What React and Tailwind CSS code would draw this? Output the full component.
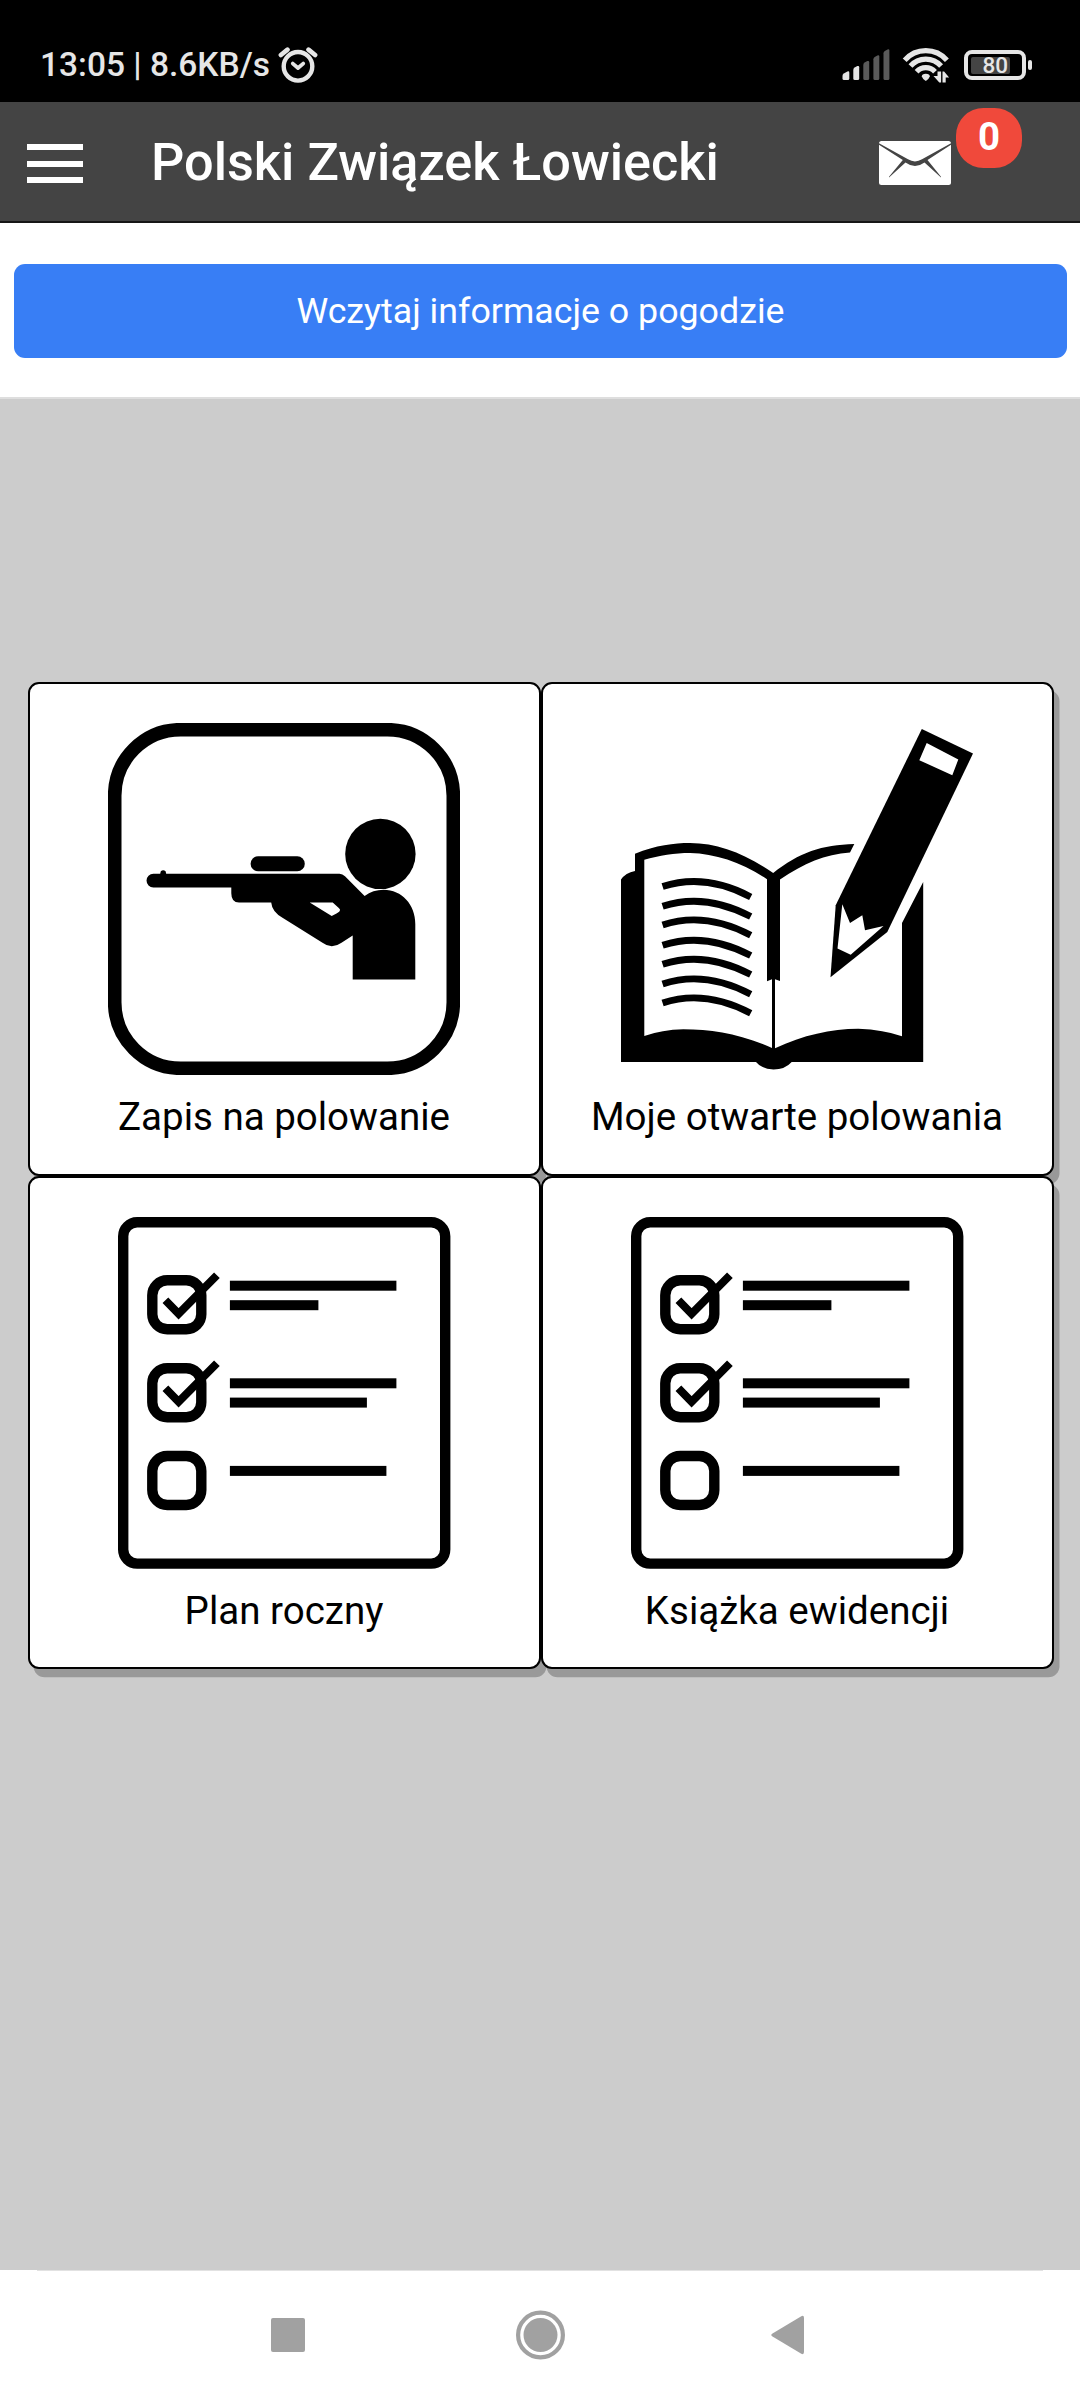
import React from "react";

const INK = "#000";

function AlarmIcon() {
  return (
    <svg className="ml-[7px] h-[38px] w-[40px]" viewBox="277.5 45 40 38" fill="none" stroke="#e6e6e6" strokeLinecap="round">
      <circle cx="297.5" cy="65.3" r="14.3" strokeWidth="4.4" />
      <path d="M292.3 62.6L297.5 67L302.7 62.6" strokeWidth="3.8" strokeLinejoin="round" />
      <path d="M280.4 54L287 48.6M314.6 54L308 48.6" strokeWidth="4.6" />
    </svg>
  );
}

function SignalIcon() {
  return (
    <svg className="h-[34px] w-[48px]" viewBox="842 48 48 34">
      <g fill="#e6e6e6">
        <path d="M842.5 76q0-1.6 1.3-2.4l3.6-2.1q1.9-.7 1.9 1.2v5.800q0 1.500-1.500 1.500h-3.800q-1.500 0-1.500-1.500z" />
        <path d="M853.300 70q0-1.600 1.300-2.400l2.700-1.500q1.900-.7 1.900 1.200v11.200q0 1.500-1.500 1.500h-2.900q-1.500 0-1.500-1.500z" />
      </g>
      <g fill="#5a5a5a">
        <path d="M863.300 65q0-1.600 1.300-2.400l2.700-1.500q1.900-.7 1.900 1.200v16.200q0 1.500-1.500 1.500h-2.900q-1.500 0-1.500-1.500z" />
        <path d="M873.400 59.300q0-1.600 1.300-2.400l2.700-1.500q1.900-.7 1.900 1.200v21.900q0 1.500-1.500 1.500h-2.900q-1.500 0-1.500-1.500z" />
        <path d="M883.500 53.300q0-1.600 1.300-2.400l2.700-1.500q1.900-.7 1.900 1.200v27.900q0 1.500-1.500 1.500h-2.900q-1.500 0-1.500-1.500z" />
      </g>
    </svg>
  );
}

function WifiIcon() {
  return (
    <svg className="ml-[12px] h-[38px] w-[48px]" viewBox="902 46 48 38">
      <g fill="none" stroke="#e6e6e6" strokeWidth="5.2">
        <path d="M904.700 60.200A28 28 0 0 1 946.900 60.200" />
        <path d="M910.500 66A20.400 20.400 0 0 1 941.100 66" />
        <path d="M916.600 71.700A12.500 12.500 0 0 1 935 71.700" />
      </g>
      <path d="M921.800 76.500Q921.800 74 925.800 73.800Q929.800 74 929.800 76.500Q929.300 78.500 925.800 81Q922.300 78.500 921.800 76.500z" fill="#e6e6e6" />
      <path d="M933.500 76h4v-4.500h3.600v11h-1.800z" fill="#e6e6e6" />
      <path d="M942.500 82.500v-11h1.600l5 6h-3.400v5z" fill="#e6e6e6" />
    </svg>
  );
}

function Battery() {
  return (
    <div className="ml-[14px] flex items-center">
      <div className="flex h-[30px] w-[62px] items-center rounded-[8px] border-4 border-[#e6e6e6] px-[3px]">
        <div className="flex h-[17px] w-[39px] items-center justify-end rounded-[2px] bg-[#444]">
          <span className="mr-[2px] text-[22.500px] leading-none font-medium text-[#e6e6e6]">80</span>
        </div>
      </div>
      <div className="ml-[2px] h-[10px] w-[4px] rounded-[2px] bg-[#e6e6e6]" />
    </div>
  );
}

function MailIcon() {
  return (
    <svg className="h-[44px] w-[72px]" viewBox="879 141 72 44">
      <rect x="879" y="141" width="72" height="44" rx="2.500" fill="#fff" />
      <path d="M879 143.200L908 159.300Q915 163.500 922 159.300L951 143.200V144.700L927.500 160L941 176.800V177.600L924.500 162.500Q915 169.500 905.500 162.500L889 177.600V176.800L902.800 160L879 144.700z" fill="#444" />
    </svg>
  );
}

function HunterIcon() {
  return (
    <svg className="h-[352px] w-[352px]" viewBox="108 722.800 352 352">
      <rect x="114.700" y="729.500" width="338.600" height="338.600" rx="66" fill="none" stroke={INK} strokeWidth="13.600" />
      <circle cx="380.400" cy="853.700" r="35.200" />
      <rect x="250.600" y="856" width="54.200" height="15" rx="7.500" />
      <path
        fillRule="evenodd"
        d="M153.400 873.500H160.200L160.800 871Q163.200 869 165.600 871L166.200 873.500H339.500Q342.500 873.500 345 876L364.600 895.700Q373 889.600 383.500 889.600C402 889.600 415.300 904.500 415.300 924V979.200H352.700V935.300L341.500 942.600Q331.700 949.600 322.500 942.600L282.500 917.600Q272 911.500 271.200 902.300H239Q231.300 902.300 231.300 893V887.300H153.400A6.900 6.900 0 0 1 153.400 873.500zM309.700 902.300L331.700 915.900L336.500 913.200Q342.500 910.500 338.500 907.500L332.700 902.300z"
      />
    </svg>
  );
}

const WRITTEN_LINES = [0, 19.7, 38.3, 58.7, 77.7, 97.3, 116.3];

function BookIcon() {
  return (
    <svg className="h-[352px] w-[352px]" viewBox="621 722.800 352 352">
      <path d="M621 879.300Q625.500 872.500 635 870.700V853.500C656 845 674 842.800 690 842.800C718 842.800 745 853.500 773.200 872.800C799 852 822 844.500 854.300 843.700L850 852.300C825 854 804 863 780 879.300V980.700L775 979V1048C803 1035 831 1028.500 858.300 1028.500Q884 1029.500 902 1036V922.700L923.200 881.700V1061.700H791.700Q785 1069.200 773.500 1069.200Q762 1069.200 756 1061.700H621z" />
      <path d="M644.300 859.600C659 855 675 852.700 690 852.700C716 853.500 742 862 767 879V981L772 979V1047.700C738 1033 712 1029 683.300 1029Q662 1029.500 644.300 1035.700z" fill="#fff" />
      <g fill="none" stroke={INK} strokeWidth="6.800">
        {WRITTEN_LINES.map((dy) => (
          <path key={dy} d="M662.600 886.400Q705 872.500 750.700 896.700" transform={`translate(0 ${dy})`} />
        ))}
      </g>
      <path d="M921.800 728.800L973 753.300L887.300 931.700L830.500 977L835.700 905z" />
      <path d="M926.700 742.700L958.300 759.300L952.300 775L919.300 760zM842.300 904L850 922.700L862.300 915L865 930L883.500 925.700L850.700 954.600L837.500 948.300z" fill="#fff" />
    </svg>
  );
}

const CHECKBOXES = [
  { y: 1280.200, checked: true },
  { y: 1368.200, checked: true },
  { y: 1456, checked: false },
];

const TEXT_BARS = [
  [1280.700, 166.500],
  [1300.200, 88.500],
  [1378.300, 166.500],
  [1397.600, 137],
  [1465.900, 156.500],
];

function ChecklistIcon() {
  return (
    <svg className="h-[352px] w-[352px]" viewBox="108 1217 352 352">
      <g fill="none" stroke={INK}>
        <rect x="123.200" y="1222.300" width="322" height="341.300" rx="14" strokeWidth="10.400" />
        {CHECKBOXES.map(({ y, checked }) => (
          <g key={y}>
            <rect x="152.300" y={y} width="49" height="49" rx="15" strokeWidth="10.400" />
            {checked && <path d="M0 0L13.200 13.500L51.500 -25" transform={`translate(165.400 ${y + 20})`} strokeWidth="8" />}
          </g>
        ))}
      </g>
      {TEXT_BARS.map(([y, width]) => (
        <rect key={y} x="229.900" y={y} width={width} height="10" />
      ))}
    </svg>
  );
}

function Tile({ icon, label, size }) {
  return (
    <button className={`flex flex-col items-center rounded-[11px] border-2 border-black bg-white pt-[39px] pr-px shadow-[5.500px_8.250px_0_#999] ${size}`}>
      {icon}
      <span className="mt-[19px] text-[38.500px] leading-[46px] whitespace-nowrap text-black">{label}</span>
    </button>
  );
}

export default function App() {
  return (
    <div className="flex h-[2400px] w-[1080px] flex-col overflow-hidden bg-[#ccc] font-['Roboto',sans-serif]">
      <div className="flex h-[102px] shrink-0 items-center justify-between bg-black pt-[28px] pr-[48px] pl-[40px]">
        <div className="flex items-center">
          <span className="w-[231px] text-[33.500px] leading-[40px] font-medium whitespace-nowrap text-[#e6e6e6]">13:05 | 8.6KB/s</span>
          <AlarmIcon />
        </div>
        <div className="flex items-center">
          <SignalIcon />
          <WifiIcon />
          <Battery />
        </div>
      </div>

      <header className="flex h-[121px] shrink-0 items-center border-b-2 border-[#161616] bg-[#444] pl-[27px] text-white">
        <div className="mt-[4px] flex w-[56px] flex-col gap-[10.600px]">
          <div className="h-[6px] bg-white" />
          <div className="h-[6px] bg-white" />
          <div className="h-[6px] bg-white" />
        </div>
        <h1 className="mt-[2px] ml-[68px] w-[728px] text-[52.250px] leading-[62px] font-medium whitespace-nowrap">Polski Związek Łowiecki</h1>
        <div className="relative mt-[3px] h-[44px] w-[72px]">
          <MailIcon />
          <span className="absolute top-[-33px] left-[77px] flex h-[60px] w-[66px] items-center justify-center rounded-[27.500px] bg-[#f0493b] pb-[3px] text-[38.500px] leading-[44px] font-bold">
            0
          </span>
        </div>
      </header>

      <section className="h-[176px] shrink-0 border-b-2 border-[#dedede] bg-white pt-[41px] pr-[13px] pl-[14px]">
        <button className="flex h-[94px] w-full items-center justify-center rounded-[11px] bg-[#387ef5] text-[35.750px] leading-[42px] text-white">
          Wczytaj informacje o pogodzie
        </button>
      </section>

      <main className="h-[1871px] shrink-0 px-[28px] pt-[283px]">
        <div className="grid w-[1026px] grid-cols-2">
          <Tile icon={<HunterIcon />} label="Zapis na polowanie" size="h-[494px]" />
          <Tile icon={<BookIcon />} label="Moje otwarte polowania" size="h-[494px]" />
          <Tile icon={<ChecklistIcon />} label="Plan roczny" size="h-[493px]" />
          <Tile icon={<ChecklistIcon />} label="Książka ewidencji" size="h-[493px]" />
        </div>
      </main>

      <nav className="h-[130px] shrink-0 bg-white px-[37px]">
        <div className="h-px bg-[#e2e2e2]" />
        <div className="flex h-[128px] items-center pl-[234px]">
          <div className="h-[34px] w-[34px] rounded-[2px] bg-[#a1a1a1]" />
          <svg className="ml-[211px] h-[50px] w-[50px]" viewBox="0 0 50 50">
            <circle cx="24.500" cy="25" r="22.400" fill="none" stroke="#a1a1a1" strokeWidth="4.200" />
            <circle cx="24.500" cy="25" r="17" fill="#a1a1a1" />
          </svg>
          <svg className="ml-[205px] h-[40px] w-[34px]" viewBox="0 0 34 40">
            <path d="M1.500 18.400L30.300 1.200Q33 0 33 3V37Q33 40 30.300 38.800L1.500 21.600Q-1 20 1.500 18.400z" fill="#a1a1a1" />
          </svg>
        </div>
      </nav>
    </div>
  );
}
